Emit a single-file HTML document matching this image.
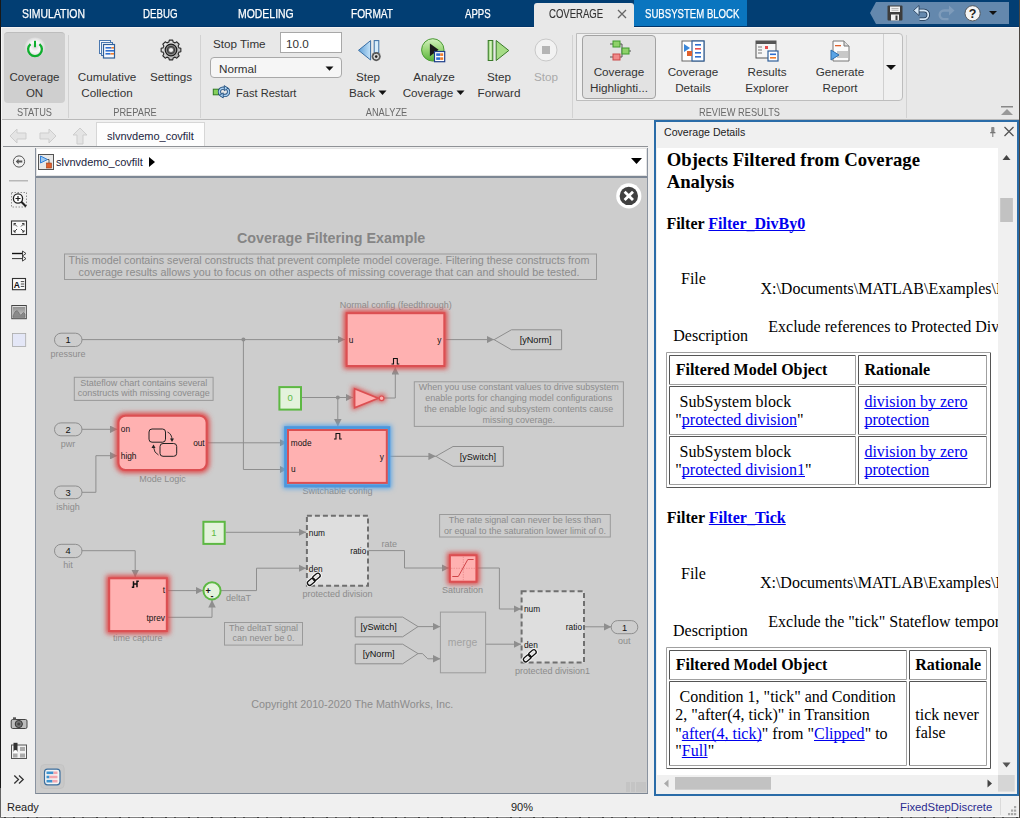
<!DOCTYPE html>
<html><head><meta charset="utf-8">
<style>
*{box-sizing:border-box}
html,body{margin:0;padding:0}
body{width:1020px;height:818px;position:relative;overflow:hidden;background:#f0f0f0;font-family:"Liberation Sans",sans-serif;color:#222}
.a{position:absolute}
.tab{position:absolute;top:7px;font-size:12px;color:#fff;white-space:nowrap;transform:scaleX(0.83);transform-origin:0 0;-webkit-text-stroke:0.25px #fff}
.rl{position:absolute;font-size:11.7px;color:#333;text-align:center;white-space:nowrap;line-height:16px;margin-top:1.5px}
.sec{position:absolute;top:106px;font-size:11px;color:#6a6a6a;white-space:nowrap;transform:scaleX(0.84);transform-origin:50% 0}
.vs{position:absolute;top:35px;width:1px;height:83px;background:#d2d2d2}
.serif{font-family:"Liberation Serif",serif;color:#000}
.lk{color:#0000ee;text-decoration:underline}
.tb{position:absolute;border-collapse:separate}
</style></head>
<body>
<!-- blue tab bar -->
<div class="a" style="left:0;top:0;width:1020px;height:27px;background:#023e73"></div>
<div class="a" style="left:0;top:0;width:1px;height:788px;background:#181818"></div><div class="a" style="left:0;top:788px;width:1px;height:30px;background:#646464"></div>
<div class="tab" style="left:22px;transform:scaleX(0.87)">SIMULATION</div>
<div class="tab" style="left:143px;transform:scaleX(0.81)">DEBUG</div>
<div class="tab" style="left:238px;transform:scaleX(0.87)">MODELING</div>
<div class="tab" style="left:351px;transform:scaleX(0.845)">FORMAT</div>
<div class="tab" style="left:465px;transform:scaleX(0.8)">APPS</div>
<div class="a" style="left:534px;top:3px;width:100px;height:24px;background:#e8e8e8;border-radius:3px 3px 0 0"></div>
<div class="tab" style="left:549px;color:#333;-webkit-text-stroke:0.15px #333;transform:scaleX(0.795)">COVERAGE</div>
<svg class="a" style="left:617px;top:9px" width="10" height="10"><path d="M1 1 L9 9 M9 1 L1 9" stroke="#666" stroke-width="1.3"/></svg>
<div class="a" style="left:634px;top:0;width:113px;height:27px;background:#0a75bf"></div>
<div class="tab" style="left:645px;transform:scaleX(0.8)">SUBSYSTEM BLOCK</div>

<!-- ribbon -->
<div class="a" style="left:1px;top:27px;width:1019px;height:92px;background:#e8e8e8"></div>
<div class="a" style="left:1px;top:119px;width:1019px;height:1px;background:#b9b9b9"></div>

<!-- STATUS -->
<div class="a" style="left:4px;top:32px;width:61px;height:71px;background:#cfcfcf;border-radius:4px;border-top:1px solid #bdbdbd"></div>
<svg class="a" style="left:23px;top:37px" width="24" height="24" viewBox="0 0 24 24">
 <defs><radialGradient id="pwg" cx="0.5" cy="0.42" r="0.5"><stop offset="0" stop-color="#ffffff" stop-opacity="0.15"/><stop offset="0.45" stop-color="#ffffff" stop-opacity="0.9"/><stop offset="1" stop-color="#ffffff" stop-opacity="0"/></radialGradient></defs>
 <circle cx="12" cy="11.5" r="11" fill="url(#pwg)"/>
 <path d="M7.56 7.01 A6.9 6.9 0 1 0 16.44 7.01" fill="none" stroke="#0fae2e" stroke-width="2.3"/>
 <rect x="11" y="3.8" width="2" height="6.4" fill="#0fae2e"/>
</svg>
<div class="rl" style="left:4px;top:67px;width:61px;font-size:11.5px">Coverage<br>ON</div>
<div class="sec" style="left:4px;width:61px;text-align:center">STATUS</div>
<div class="vs" style="left:68px"></div>
<!-- PREPARE -->
<svg class="a" style="left:98px;top:39px" width="20" height="20" viewBox="0 0 20 20">
 <rect x="1.5" y="1.5" width="11" height="13" fill="#f4f8fc" stroke="#4a78b0" stroke-width="1"/>
 <rect x="3.5" y="3.5" width="11" height="13" fill="#f4f8fc" stroke="#4a78b0" stroke-width="1"/>
 <rect x="5.5" y="5.5" width="11" height="13.5" fill="#f7f9fc" stroke="#2f5f9a" stroke-width="1.2"/>
 <rect x="7.5" y="8" width="6" height="1.6" fill="#2f6fcf"/><rect x="13.5" y="8" width="2.5" height="1.6" fill="#f07c2c"/>
 <rect x="7.5" y="11" width="8.5" height="1.6" fill="#2f6fcf"/>
 <rect x="7.5" y="14" width="5" height="1.6" fill="#2f6fcf"/><rect x="12.5" y="14" width="3.5" height="1.6" fill="#f07c2c"/>
</svg>
<div class="rl" style="left:72px;top:67px;width:70px">Cumulative<br>Collection</div>
<svg class="a" style="left:160px;top:39px" width="22" height="22" viewBox="0 0 22 22">
 <defs><linearGradient id="gg" x1="0" y1="0" x2="1" y2="1"><stop offset="0" stop-color="#f4f4f4"/><stop offset="1" stop-color="#a8a8a8"/></linearGradient></defs>
 <path d="M8.84 3.09 L9.28 1.15 L12.72 1.15 L13.16 3.09 L15.06 3.88 L16.75 2.82 L19.18 5.25 L18.12 6.94 L18.91 8.84 L20.85 9.28 L20.85 12.72 L18.91 13.16 L18.12 15.06 L19.18 16.75 L16.75 19.18 L15.06 18.12 L13.16 18.91 L12.72 20.85 L9.28 20.85 L8.84 18.91 L6.94 18.12 L5.25 19.18 L2.82 16.75 L3.88 15.06 L3.09 13.16 L1.15 12.72 L1.15 9.28 L3.09 8.84 L3.88 6.94 L2.82 5.25 L5.25 2.82 L6.94 3.88 Z" fill="url(#gg)" stroke="#2a2a2a" stroke-width="1.1" stroke-linejoin="round"/>
 <circle cx="11" cy="11" r="5.8" fill="#8a8a8a" stroke="#1a1a1a" stroke-width="1.2"/>
 <circle cx="11" cy="11" r="3.7" fill="#6a6a6a" stroke="#333" stroke-width="0.9"/>
 <circle cx="11" cy="11" r="2.1" fill="#eeeeee"/>
</svg>
<div class="rl" style="left:146px;top:67px;width:50px">Settings</div>
<div class="sec" style="left:69px;width:132px;text-align:center">PREPARE</div>
<div class="vs" style="left:200px"></div>
<!-- ANALYZE -->
<div class="a" style="left:213px;top:37px;font-size:11.7px;color:#333">Stop Time</div>
<div class="a" style="left:280px;top:32px;width:62px;height:21px;background:#fff;border:1px solid #a8a8a8"></div>
<div class="a" style="left:286px;top:37px;font-size:11.7px;color:#333">10.0</div>
<div class="a" style="left:210px;top:57px;width:132px;height:21px;background:#f6f6f6;border:1px solid #a9a9a9;border-radius:4px"></div>
<div class="a" style="left:219px;top:62px;font-size:11.7px;color:#333">Normal</div>
<svg class="a" style="left:325px;top:66px" width="9" height="6"><path d="M0.5 0.5 L8.5 0.5 L4.5 4.8 Z" fill="#111"/></svg>
<svg class="a" style="left:212px;top:85px" width="18" height="15" viewBox="0 0 18 15">
 <rect x="1.3" y="4.2" width="5.2" height="5.6" fill="#86d05a" stroke="#2f7a22" stroke-width="1"/>
 <path d="M13 3.2 H11 A3.6 3.6 0 0 0 11 10.4 M10.5 10.4 H13 A3.6 3.6 0 0 0 13 3.2" fill="none" stroke="#24507e" stroke-width="3.2"/>
 <path d="M13 3.2 H11 A3.6 3.6 0 0 0 11 10.4 M10.5 10.4 H13 A3.6 3.6 0 0 0 13 3.2" fill="none" stroke="#a9d0f2" stroke-width="1.5"/>
 <path d="M12.3 0.6 L16 3.2 L12.3 5.8 Z" fill="#a9d0f2" stroke="#24507e" stroke-width="0.9"/>
 <path d="M11.2 7.8 L7.5 10.4 L11.2 13 Z" fill="#a9d0f2" stroke="#24507e" stroke-width="0.9"/>
</svg>
<div class="a" style="left:236px;top:87px;font-size:11.1px;color:#333">Fast Restart</div>
<!-- step back -->
<svg class="a" style="left:357px;top:38px" width="26" height="24" viewBox="0 0 26 24">
 <defs><linearGradient id="sbg" x1="0" y1="0" x2="1" y2="0"><stop offset="0" stop-color="#5e9fd6"/><stop offset="1" stop-color="#c4e2f8"/></linearGradient></defs>
 <path d="M1.5 12.3 L13.6 2.6 L13.6 22 Z" fill="url(#sbg)" stroke="#3a6ea5" stroke-width="1"/>
 <rect x="17.2" y="2.6" width="4.6" height="12" fill="#d6ecfb" stroke="#3a6ea5" stroke-width="1"/>
 <circle cx="19.2" cy="18.6" r="4.6" fill="#6a6a6a"/>
 <circle cx="19.2" cy="18.6" r="3.4" fill="#d8d8d8" stroke="#333" stroke-width="0.8"/>
 <circle cx="19.2" cy="18.6" r="1.3" fill="#222"/>
</svg>
<div class="rl" style="left:343px;top:67px;width:50px">Step<br>Back<svg width="9" height="6" style="vertical-align:1px;margin-left:3px"><path d="M0.5 0.5 H8.5 L4.5 5 Z" fill="#111"/></svg></div>
<!-- analyze coverage -->
<svg class="a" style="left:419px;top:37px" width="28" height="26" viewBox="0 0 28 26">
 <defs><linearGradient id="acg" x1="0" y1="0" x2="0" y2="1"><stop offset="0" stop-color="#d4f0c0"/><stop offset="0.5" stop-color="#98d676"/><stop offset="1" stop-color="#58b23a"/></linearGradient></defs>
 <circle cx="13.8" cy="12.9" r="11.2" fill="url(#acg)" stroke="#4a9a34" stroke-width="1"/>
 <path d="M10.9 6.6 L19.6 12.8 L10.9 19.2 Z" fill="#1a1a1a"/>
 <rect x="15.5" y="14.5" width="10.2" height="10.2" fill="#fff" stroke="#1e3f8a" stroke-width="1.2"/>
 <rect x="17.2" y="16.3" width="4" height="2.6" fill="#2f6fcf"/><rect x="21.2" y="16.3" width="3" height="2.6" fill="#f07c2c"/>
 <rect x="17.2" y="20.3" width="4" height="2.6" fill="#2f6fcf"/><rect x="21.2" y="20.3" width="3" height="2.6" fill="#f07c2c"/>
</svg>
<div class="rl" style="left:398px;top:67px;width:72px">Analyze<br>Coverage<svg width="9" height="6" style="vertical-align:1px;margin-left:3px"><path d="M0.5 0.5 H8.5 L4.5 5 Z" fill="#111"/></svg></div>
<!-- step forward -->
<svg class="a" style="left:486px;top:38px" width="26" height="24" viewBox="0 0 26 24">
 <defs><linearGradient id="sfg" x1="0" y1="0" x2="1" y2="0"><stop offset="0" stop-color="#7cc85a"/><stop offset="0.5" stop-color="#d8f4c4"/><stop offset="1" stop-color="#8ed06a"/></linearGradient></defs>
 <rect x="2.2" y="2.5" width="4.6" height="20" fill="url(#sfg)" stroke="#3a7a2a" stroke-width="1"/>
 <path d="M10.2 2.5 L22.8 12.5 L10.2 22.5 Z" fill="#a6dc86" stroke="#3a7a2a" stroke-width="1"/>
</svg>
<div class="rl" style="left:474px;top:67px;width:50px">Step<br>Forward</div>
<!-- stop -->
<svg class="a" style="left:534px;top:38px" width="24" height="24" viewBox="0 0 24 24">
 <circle cx="12" cy="12" r="11" fill="#f2f2f2" stroke="#c8c8c8" stroke-width="1"/>
 <rect x="8" y="8" width="8" height="8" fill="#b4b4b4"/>
</svg>
<div class="rl" style="left:526px;top:67px;width:40px;color:#aaa">Stop</div>
<div class="sec" style="left:201px;width:371px;text-align:center">ANALYZE</div>
<div class="vs" style="left:572px"></div>
<!-- REVIEW RESULTS -->
<div class="a" style="left:576px;top:33px;width:327px;height:68px;background:#f0f0f0;border:1px solid #bdbdbd;border-radius:0 4px 4px 0"></div>
<div class="a" style="left:883px;top:34px;width:1px;height:66px;background:#d0d0d0"></div>
<svg class="a" style="left:886px;top:65px" width="11" height="6"><path d="M0 0 L10 0 L5 5 Z" fill="#111"/></svg>
<div class="a" style="left:582px;top:35px;width:74px;height:64px;background:#e2e2e2;border:1px solid #a3a3a3;border-radius:4px"></div>
<svg class="a" style="left:606px;top:40px" width="26" height="22" viewBox="0 0 26 22">
 <path d="M4 4 h3 M4 17 h3 M13 4 h3 v9 M13 17 h3 v-4 h2 M22 11 h3" stroke="#555" stroke-width="1" fill="none"/>
 <rect x="7" y="1" width="7" height="6" fill="#8fd16a" stroke="#3f9a2c" stroke-width="1"/>
 <rect x="16" y="8" width="7" height="6" fill="#8fd16a" stroke="#3f9a2c" stroke-width="1"/>
 <rect x="7" y="14" width="7" height="6" fill="#f08a8a" stroke="#c94a4a" stroke-width="1"/>
</svg>
<div class="rl" style="left:582px;top:62px;width:74px">Coverage<br>Highlighti...</div>
<svg class="a" style="left:681px;top:40px" width="24" height="22" viewBox="0 0 24 22">
 <rect x="1" y="1" width="22" height="20" fill="#fff" stroke="#666" stroke-width="1"/>
 <rect x="11" y="1" width="12" height="20" fill="#fff" stroke="#2f5f9a" stroke-width="1.2"/>
 <path d="M3 4 L9 8 L3 12 Z" fill="#3a86d8"/>
 <rect x="6" y="11" width="5" height="5" fill="#e0602c"/>
 <rect x="14" y="4" width="6" height="1.6" fill="#2f6fcf"/><rect x="14" y="8" width="6" height="1.6" fill="#e84c4c"/>
 <rect x="14" y="12" width="6" height="1.6" fill="#2f6fcf"/><rect x="14" y="16" width="6" height="1.6" fill="#2f6fcf"/>
</svg>
<div class="rl" style="left:660px;top:62px;width:66px">Coverage<br>Details</div>
<svg class="a" style="left:755px;top:40px" width="24" height="22" viewBox="0 0 24 22">
 <rect x="1" y="1" width="20" height="17" fill="#f6f6f6" stroke="#555" stroke-width="1"/>
 <rect x="1" y="1" width="20" height="3" fill="#555"/>
 <path d="M3 7 h4 M3 10 h4 M3 13 h4" stroke="#777" stroke-width="1"/>
 <rect x="10" y="6" width="3" height="3" fill="#e84c4c"/>
 <rect x="13" y="11" width="10" height="10" fill="#fff" stroke="#2f5f9a" stroke-width="1.2"/>
 <rect x="15" y="13.5" width="6" height="1.6" fill="#2f6fcf"/><rect x="15" y="17" width="6" height="1.6" fill="#f07c2c"/>
</svg>
<div class="rl" style="left:734px;top:62px;width:66px">Results<br>Explorer</div>
<svg class="a" style="left:829px;top:40px" width="22" height="22" viewBox="0 0 22 22">
 <path d="M4 1 h11 l5 5 v15 h-16 z" fill="#fbfbfb" stroke="#777" stroke-width="1"/>
 <path d="M15 1 v5 h5" fill="#ddd" stroke="#777" stroke-width="1"/>
 <rect x="6" y="5" width="6" height="1.3" fill="#e0602c"/>
 <rect x="8" y="11" width="11" height="7" fill="#c8c8c8"/>
 <path d="M2 10 L10 15 L2 20 Z" fill="#5aa4e6" stroke="#2f6fad" stroke-width="1"/>
</svg>
<div class="rl" style="left:806px;top:62px;width:68px">Generate<br>Report</div>
<div class="sec" style="left:576px;width:327px;text-align:center">REVIEW RESULTS</div>
<div class="vs" style="left:906px"></div>
<svg class="a" style="left:1000px;top:106px" width="14" height="10"><rect x="1" y="0" width="12" height="1.5" fill="#888"/><path d="M1 9 L7 3 L13 9 Z" fill="#999"/></svg>
<!-- quick access -->
<svg class="a" style="left:868px;top:2px" width="142" height="22" viewBox="0 0 142 22">
 <path d="M8 0 H141 V22 H8 L2 11 Z" fill="#6488ad"/>
 <rect x="19.5" y="3.5" width="15" height="15" fill="#3c3c3c" rx="1"/>
 <rect x="22" y="4.5" width="10" height="5.5" fill="#f0f0f0"/>
 <path d="M23.5 6.5 h7 M23.5 8.3 h7" stroke="#999" stroke-width="0.7"/>
 <rect x="23" y="12.5" width="8" height="6" fill="#f0f0f0"/><rect x="27.5" y="13.5" width="2" height="4.5" fill="#3c3c3c"/>
 <path d="M50 8.5 h6 a4.3 4.3 0 0 1 0 8.6 h-4.5" fill="none" stroke="#1f3650" stroke-width="3.4"/>
 <path d="M50 8.5 h6 a4.3 4.3 0 0 1 0 8.6 h-4.5" fill="none" stroke="#d4e6f6" stroke-width="1.8"/>
 <path d="M45.5 8.5 l5.5 -5 v10 z" fill="#d4e6f6" stroke="#1f3650" stroke-width="0.8"/>
 <path d="M82 8.5 h-6 a4.3 4.3 0 0 0 0 8.6 h4.5" fill="none" stroke="#7e9bba" stroke-width="2.4"/>
 <path d="M86.5 8.5 l-5.5 -5 v10 z" fill="#7e9bba"/>
 <circle cx="104.6" cy="11.3" r="7.6" fill="#f4f4f4" stroke="#444" stroke-width="0.8"/>
 <text x="104.6" y="16" font-size="12.5" font-weight="bold" text-anchor="middle" fill="#222" font-family="Liberation Sans">?</text>
 <path d="M121 9 h8 l-4 4 z" fill="#111"/>
</svg>


<div class="a" style="left:1px;top:27px;width:533px;height:1px;background:#f6f4f2"></div>
<div class="a" style="left:634px;top:27px;width:386px;height:1px;background:#f6f4f2"></div>
<div class="a" style="left:1px;top:27px;width:1px;height:789px;background:#f6f6f6"></div>
<div class="a" style="left:1px;top:26px;width:533px;height:1px;background:#01356a"></div>
<div class="a" style="left:634px;top:26px;width:386px;height:1px;background:#01356a"></div>
<!-- doc tab row -->
<div class="a" style="left:1px;top:120px;width:654px;height:27px;background:#f0f0f0"></div>
<svg class="a" style="left:8px;top:127px" width="90" height="18" viewBox="0 0 90 18">
 <path d="M2 9 L9 2 V6 H18 V12 H9 V16 Z" fill="#e4e4e4" stroke="#cdcdcd" stroke-width="1"/>
 <path d="M58 9 L51 2 V6 H42 V12 H51 V16 Z" transform="translate(-10 0)" fill="#e4e4e4" stroke="#cdcdcd" stroke-width="1"/>
 <path d="M72 1 L79 8 H75 V17 H69 V8 H65 Z" fill="#e4e4e4" stroke="#cdcdcd" stroke-width="1"/>
</svg>
<div class="a" style="left:96px;top:122px;width:109px;height:25px;background:#fdfdfd;border:1px solid #d6d6d6;border-bottom:none"></div>
<div class="a" style="left:107px;top:130px;font-size:11px;color:#1b2440">slvnvdemo_covfilt</div>
<div class="a" style="left:3px;top:146px;width:645px;height:1px;background:#8f9296"></div>
<!-- left toolbar -->
<div class="a" style="left:1px;top:148px;width:34px;height:647px;background:#f0f0f0"></div>
<div class="a" style="left:35px;top:148px;width:1px;height:646px;background:#8a93a0"></div>
<!-- address bar -->
<div class="a" style="left:36px;top:148px;width:611px;height:28px;background:#fff;border:1px solid #e4e4e4"></div>
<div class="a" style="left:36px;top:176px;width:612px;height:2px;background:#7d8794"></div>
<div class="a" style="left:38px;top:154px;width:16px;height:16px;background:#e8e8e8;border:1px solid #555"></div>
<svg class="a" style="left:39px;top:155px" width="14" height="14"><path d="M1.5 1 L8.5 4.5 L1.5 8 Z" fill="#9cc8f0" stroke="#2f7fd8" stroke-width="1"/><path d="M8.5 4.5 H10 V8" stroke="#333" fill="none" stroke-width="0.8"/><rect x="7.5" y="8" width="5" height="5" fill="#e0602c" stroke="#a03a10" stroke-width="0.6"/></svg>
<div class="a" style="left:56px;top:156px;font-size:11px;color:#1b2440">slvnvdemo_covfilt</div>
<svg class="a" style="left:148px;top:156px" width="8" height="12"><path d="M1 1 L7 6 L1 11 Z" fill="#000"/></svg>
<svg class="a" style="left:631px;top:157px" width="12" height="8"><path d="M0 1 H11 L5.5 7 Z" fill="#000"/></svg>
<!-- canvas -->
<div class="a" style="left:36px;top:178px;width:611px;height:615px;background:#cdcdcd"></div>
<div class="a" style="left:647px;top:148px;width:1px;height:646px;background:#8a93a0"></div>
<div class="a" style="left:36px;top:793px;width:612px;height:1px;background:#7d8794"></div>
<!-- status bar -->
<div class="a" style="left:1px;top:795px;width:1019px;height:22px;background:#f0f0f0"></div>
<div class="a" style="left:7px;top:801px;font-size:11px;color:#222">Ready</div>
<div class="a" style="left:511px;top:801px;font-size:11px;color:#222">90%</div>
<div class="a" style="left:900px;top:801px;font-size:11.3px;color:#2b2b8f">FixedStepDiscrete</div>
<div class="a" style="left:1000px;top:798px;width:1px;height:17px;background:#dadada"></div>
<div class="a" style="left:1px;top:816px;width:1019px;height:1px;background:#fafafa"></div><div class="a" style="left:0;top:817px;width:1020px;height:1px;background:repeating-linear-gradient(90deg,#7a7a7a 0 4px,#3a3a3a 4px 6px,#8a8a8a 6px 13px,#4a4a4a 13px 15px,#808080 15px 23px)"></div>
<!-- right panel -->
<div class="a" style="left:654px;top:120px;width:365px;height:676px;border:2px solid #2a6ca8;background:#f0f0f0"></div>
<div class="a" style="left:664px;top:126px;font-size:10.6px;color:#222">Coverage Details</div>
<div class="a" style="left:657px;top:148px;width:341px;height:627px;background:#fff"></div>

<!-- left toolbar icons -->
<svg class="a" style="left:1px;top:148px" width="34" height="646" viewBox="1 148 34 646">
 <circle cx="19" cy="161.5" r="5.6" fill="#f2f2f2" stroke="#555" stroke-width="1"/>
 <path d="M15.8 161.5 L18.6 158.8 V160.6 H22.3 V162.4 H18.6 V164.2 Z" fill="#555"/>
 <rect x="9" y="180" width="19" height="1.5" fill="#b8b8b8"/>
 <rect x="11.5" y="192.5" width="15" height="14.5" fill="none" stroke="#777" stroke-width="0.8" stroke-dasharray="1.5 1.5"/>
 <circle cx="18" cy="198.5" r="4.6" fill="#fff" stroke="#222" stroke-width="1.3"/>
 <path d="M15.5 198.5 H20.5 M18 196 V201" stroke="#222" stroke-width="1.2"/>
 <path d="M21.3 201.8 L26 206.5" stroke="#222" stroke-width="2"/>
 <rect x="11.5" y="221" width="15" height="13.5" fill="#fafafa" stroke="#333" stroke-width="1.1"/>
 <path d="M14 223.5 L17 226.5 M14 223.5 H16 M14 223.5 V225.5 M24 223.5 L21 226.5 M24 223.5 H22 M24 223.5 V225.5 M14 232 L17 229 M14 232 H16 M14 232 V230 M24 232 L21 229 M24 232 H22 M24 232 V230" stroke="#333" stroke-width="0.9" fill="none"/>
 <path d="M12 253.5 H23" stroke="#111" stroke-width="1.4"/>
 <path d="M12 258.6 H23" stroke="#333" stroke-width="1"/>
 <path d="M22.5 251 L26 253.5 L22.5 256 Z M22.5 256.1 L26 258.6 L22.5 261.1 Z" stroke="#333" stroke-width="0.9" fill="#f0f0f0"/>
 <rect x="12.5" y="278.5" width="13" height="11.2" fill="#fafafa" stroke="#333" stroke-width="1.1"/>
 <text x="13.8" y="287.6" font-size="8.5" font-weight="bold" fill="#111" font-family="Liberation Sans">A</text>
 <path d="M20.8 281.6 H24.2 M20.8 284 H24.2 M20.8 286.4 H24.2" stroke="#333" stroke-width="0.9"/>
 <defs><linearGradient id="imgg" x1="0" y1="0" x2="0" y2="1"><stop offset="0" stop-color="#909090"/><stop offset="1" stop-color="#d0d0d0"/></linearGradient></defs>
 <rect x="11.8" y="305.5" width="14.5" height="13.2" fill="#f4f4f4" stroke="#444" stroke-width="1"/>
 <rect x="13" y="306.8" width="12.1" height="10.6" fill="url(#imgg)"/>
 <path d="M13 316 Q16 308 18.5 312 Q20.5 317 22 314 Q23.5 311 25 314 V317.4 H13 Z" fill="#8a8a8a" stroke="#666" stroke-width="0.6"/>
 <rect x="12.5" y="333.5" width="13.2" height="13" fill="#e4e7f7" stroke="#aaa" stroke-width="0.8"/>
 <!-- camera -->
 <rect x="11.2" y="719.5" width="15.8" height="9" rx="1.5" fill="#bdbdbd" stroke="#444" stroke-width="1"/>
 <rect x="13" y="717.3" width="3" height="2.5" fill="#555"/>
 <circle cx="18.8" cy="724" r="3.6" fill="#777" stroke="#333" stroke-width="1"/>
 <circle cx="18.8" cy="724" r="1.6" fill="#444"/>
 <!-- layout icon -->
 <rect x="11.5" y="745" width="15" height="13.5" fill="#f2f2f2" stroke="#555" stroke-width="1"/>
 <rect x="13.5" y="742.8" width="4" height="9" fill="#333"/>
 <circle cx="15.5" cy="752" r="2" fill="#fff"/>
 <rect x="20" y="747" width="5" height="4" fill="#aaa"/><rect x="13" y="753.5" width="4.5" height="4" fill="#aaa"/><rect x="20" y="753.5" width="5" height="4" fill="#aaa"/>
 <path d="M14.3 775.5 L18.5 779.5 L14.3 783.5 M19 775.5 L23.2 779.5 L19 783.5" stroke="#333" stroke-width="1.3" fill="none"/>
</svg>
<!-- right panel content -->
<svg class="a" style="left:985px;top:124px" width="32" height="16" viewBox="0 0 32 16">
 <rect x="6.2" y="3" width="3.2" height="5.5" rx="0.8" fill="#8a8a8a"/><rect x="5.2" y="8" width="5.2" height="1.3" fill="#777"/><rect x="7.3" y="9" width="1" height="4" fill="#777"/>
 <path d="M19.5 3 L28.5 12 M28.5 3 L19.5 12" stroke="#555" stroke-width="1.3"/>
</svg>
<svg class="a" style="left:657px;top:148px" width="341" height="627" viewBox="657 148 341 627" font-family="Liberation Serif">
 <g fill="#000">
  <text x="666.7" y="165.6" font-size="18.72" font-weight="bold">Objects Filtered from Coverage</text>
  <text x="666.7" y="187.6" font-size="18.72" font-weight="bold">Analysis</text>
  <text x="666.4" y="229" font-size="16" font-weight="bold">Filter <tspan fill="#0000ee">Filter_DivBy0</tspan></text>
  <text x="681" y="284.4" font-size="16">File</text>
  <text x="760.4" y="293.6" font-size="16">X:\Documents\MATLAB\Examples\R2020b\slcoverage</text>
  <text x="673.3" y="341.2" font-size="16">Description</text>
  <text x="768.3" y="332.0" font-size="16">Exclude references to Protected Division blocks</text>
  <text x="666.8" y="522.5" font-size="16" font-weight="bold">Filter <tspan fill="#0000ee">Filter_Tick</tspan></text>
  <text x="681" y="579.3" font-size="16">File</text>
  <text x="759.9" y="588.2" font-size="16">X:\Documents\MATLAB\Examples\R2020b\slcoverage</text>
  <text x="673" y="636.2" font-size="16">Description</text>
  <text x="768.3" y="627.0" font-size="16">Exclude the "tick" Stateflow temporal event</text>
 </g>
 <!-- table 1 -->
 <g fill="none" stroke-width="1">
  <path d="M666.5 487.5 V352.5 H990" stroke="#a0a0a0"/>
  <path d="M990.5 352.5 V487.5 H666.5" stroke="#555"/>
 </g>
 <g id="cells1" fill="none" stroke-width="1">
  <path d="M669.5 384.5 V355.5 H855.5" stroke="#555"/><path d="M855.5 355.5 V384.5 H669.5" stroke="#a0a0a0"/>
  <path d="M858.5 384.5 V355.5 H986.5" stroke="#555"/><path d="M986.5 355.5 V384.5 H858.5" stroke="#a0a0a0"/>
  <path d="M669.5 434.5 V386.5 H855.5" stroke="#555"/><path d="M855.5 386.5 V434.5 H669.5" stroke="#a0a0a0"/>
  <path d="M858.5 434.5 V386.5 H986.5" stroke="#555"/><path d="M986.5 386.5 V434.5 H858.5" stroke="#a0a0a0"/>
  <path d="M669.5 484.5 V436.5 H855.5" stroke="#555"/><path d="M855.5 436.5 V484.5 H669.5" stroke="#a0a0a0"/>
  <path d="M858.5 484.5 V436.5 H986.5" stroke="#555"/><path d="M986.5 436.5 V484.5 H858.5" stroke="#a0a0a0"/>
 </g>
 <g font-size="16" fill="#000">
  <text x="675.7" y="374.8" font-weight="bold">Filtered Model Object</text>
  <text x="864.4" y="374.8" font-weight="bold">Rationale</text>
  <text x="679.6" y="407.2">SubSystem block</text>
  <text x="675.3" y="425.4">"<tspan fill="#0000ee">protected division</tspan>"</text>
  <text x="864.4" y="407.4" fill="#0000ee">division by zero</text>
  <text x="864.4" y="425.4" fill="#0000ee">protection</text>
  <text x="679.6" y="457.2">SubSystem block</text>
  <text x="675.3" y="475.4">"<tspan fill="#0000ee">protected division1</tspan>"</text>
  <text x="864.4" y="457.4" fill="#0000ee">division by zero</text>
  <text x="864.4" y="475.4" fill="#0000ee">protection</text>
 </g>
 <!-- table 2 -->
 <g fill="none" stroke-width="1">
  <path d="M666.5 768.5 V647.5 H990" stroke="#a0a0a0"/>
  <path d="M990.5 647.5 V768.5 H666.5" stroke="#555"/>
  <path d="M669.5 679.5 V650.5 H906.5" stroke="#555"/><path d="M906.5 650.5 V679.5 H669.5" stroke="#a0a0a0"/>
  <path d="M909.5 679.5 V650.5 H986.5" stroke="#555"/><path d="M986.5 650.5 V679.5 H909.5" stroke="#a0a0a0"/>
  <path d="M669.5 765.5 V681.5 H906.5" stroke="#555"/><path d="M906.5 681.5 V765.5 H669.5" stroke="#a0a0a0"/>
  <path d="M909.5 765.5 V681.5 H986.5" stroke="#555"/><path d="M986.5 681.5 V765.5 H909.5" stroke="#a0a0a0"/>
 </g>
 <g font-size="16" fill="#000">
  <text x="675.7" y="669.8" font-weight="bold">Filtered Model Object</text>
  <text x="915.3" y="669.8" font-weight="bold">Rationale</text>
  <text x="679.6" y="702.2">Condition 1, "tick" and Condition</text>
  <text x="675.3" y="720.4">2, "after(4, tick)" in Transition</text>
  <text x="675.3" y="738.5">"<tspan fill="#0000ee">after(4, tick)</tspan>" from "<tspan fill="#0000ee">Clipped</tspan>" to</text>
  <text x="675.3" y="756.3">"<tspan fill="#0000ee">Full</tspan>"</text>
  <text x="915.3" y="720.2">tick never</text>
  <text x="915.3" y="738.2">false</text>
 </g>
 <g stroke="#0000ee" stroke-width="1" fill="none">
  <path d="M708.4 230.5 H805.3"/>
  <path d="M708.8 524.5 H785.8"/>
  <path d="M681.8 426.5 H797.0"/>
  <path d="M864.4 408.5 H967.5"/>
  <path d="M864.4 426.5 H929.3"/>
  <path d="M681.8 476.5 H805.0"/>
  <path d="M864.4 458.5 H967.5"/>
  <path d="M864.4 476.5 H929.3"/>
  <path d="M681.8 740.5 H761.8"/>
  <path d="M814.0 740.5 H864.7"/>
  <path d="M681.8 757.5 H707.6"/>
 </g>
</svg>
<!-- scrollbars -->
<div class="a" style="left:998px;top:148px;width:19px;height:627px;background:#f0f0f0"></div>
<svg class="a" style="left:998px;top:148px" width="19" height="627">
 <path d="M4.5 12 L8.5 7 L12.5 12 Z" fill="#444"/>
 <rect x="2.2" y="50" width="12.7" height="24" fill="#c2c2c2"/>
 <path d="M4.5 614.5 L8.5 619.5 L12.5 614.5 Z" fill="#555"/>
</svg>
<div class="a" style="left:657px;top:775px;width:360px;height:19px;background:#f0f0f0"></div>
<svg class="a" style="left:657px;top:775px" width="360" height="19">
 <path d="M11.5 4.5 L7 8.5 L11.5 12.5 Z" fill="#aaa"/>
 <rect x="18" y="2" width="96" height="12.7" fill="#c2c2c2"/>
 <path d="M330.5 4.5 L335 8.5 L330.5 12.5 Z" fill="#444"/>
 <rect x="341" y="0" width="16.7" height="16.6" fill="#d6d6d6"/>
</svg>

<!-- DIAGRAM -->
<svg class="a" style="left:0;top:0" width="1020" height="818" viewBox="0 0 1020 818" font-family="Liberation Sans">
<defs>
 <filter id="glow" x="-40%" y="-40%" width="180%" height="180%"><feGaussianBlur stdDeviation="2.7"/></filter>
 <marker id="ar" viewBox="0 0 10 10" refX="10" refY="5" markerWidth="7.5" markerHeight="7.5" markerUnits="userSpaceOnUse" orient="auto"><path d="M0 0 L10 5 L0 10 Z" fill="#8e8e8e"/></marker>
</defs>
<!-- close button -->
<circle cx="628.8" cy="195.9" r="12.6" fill="#fff"/>
<circle cx="628.8" cy="195.9" r="9.2" fill="#404040"/>
<path d="M624.6 191.7 L633 200.1 M633 191.7 L624.6 200.1" stroke="#fff" stroke-width="2.8"/>
<!-- title & annotations -->
<text x="237" y="243" font-size="14.3" font-weight="bold" fill="#858585">Coverage Filtering Example</text>
<rect x="64.5" y="254" width="532" height="25.5" fill="none" stroke="#9a9a9a" stroke-width="1"/>
<g font-size="10.75" fill="#8c8c8c" text-anchor="middle">
 <text x="329" y="263.5">This model contains several constructs that prevent complete model coverage. Filtering these constructs from</text>
 <text x="329" y="276">coverage results allows you to focus on other aspects of missing coverage that can and should be tested.</text>
</g>
<rect x="74.3" y="377.3" width="138.8" height="23.1" fill="none" stroke="#9a9a9a" stroke-width="1"/>
<g font-size="9" fill="#8c8c8c" text-anchor="middle">
 <text x="143.7" y="386">Stateflow chart contains several</text>
 <text x="143.7" y="396">constructs with missing coverage</text>
</g>
<rect x="414.3" y="381.8" width="209.1" height="44.6" fill="none" stroke="#9a9a9a" stroke-width="1"/>
<g font-size="9" fill="#8c8c8c" text-anchor="middle">
 <text x="518.8" y="389.6">When you use constant values to drive subsystem</text>
 <text x="518.8" y="400.6">enable ports for changing model configurations</text>
 <text x="518.8" y="411.6">the enable logic and subsystem contents cause</text>
 <text x="518.8" y="422.6">missing coverage.</text>
</g>
<rect x="439.6" y="514.5" width="170.7" height="22.5" fill="none" stroke="#9a9a9a" stroke-width="1"/>
<g font-size="9" fill="#8c8c8c" text-anchor="middle">
 <text x="525" y="522.5">The rate signal can never be less than</text>
 <text x="525" y="533.5">or equal to the saturation lower limit of 0.</text>
</g>
<rect x="224.5" y="622.5" width="78" height="22.6" fill="none" stroke="#9a9a9a" stroke-width="1"/>
<g font-size="9" fill="#8c8c8c" text-anchor="middle">
 <text x="263.5" y="631">The deltaT signal</text>
 <text x="263.5" y="640.6">can never be 0.</text>
</g>
<text x="251.2" y="707.7" font-size="10.75" fill="#8c8c8c">Copyright 2010-2020 The MathWorks, Inc.</text>

<!-- signal lines -->
<g stroke="#8e8e8e" stroke-width="1" fill="none">
 <path d="M82 339.6 H345" marker-end="url(#ar)"/>
 <path d="M243.4 339.6 V469.5 H287" marker-end="url(#ar)"/>
 <path d="M445.3 339.6 H494" marker-end="url(#ar)"/>
 <path d="M81.8 429.3 H117.5" marker-end="url(#ar)"/>
 <path d="M81.8 492.3 H95.9 V455.7 H117.5" marker-end="url(#ar)"/>
 <path d="M207.6 442.8 H287" marker-end="url(#ar)"/>
 <path d="M302 397.5 H353" marker-end="url(#ar)"/>
 <path d="M337.8 397.5 V426.5" marker-end="url(#ar)"/>
 <path d="M384.2 398 H395.3 V367" marker-end="url(#ar)"/>
 <path d="M390.2 456.3 H435.9" marker-end="url(#ar)"/>
 <path d="M225.7 532.3 H306" marker-end="url(#ar)"/>
 <path d="M81.8 550.7 H135.2 V577.3" marker-end="url(#ar)"/>
 <path d="M167.8 590.6 H203" marker-end="url(#ar)"/>
 <path d="M167.8 617.3 H212 V600" marker-end="url(#ar)"/>
 <path d="M221 590.6 H256.5 V568.2 H306" marker-end="url(#ar)"/>
 <path d="M369 550.6 H404.5 V568 H449.2" marker-end="url(#ar)"/>
 <path d="M477.5 568 H499.4 V609 H521.1" marker-end="url(#ar)"/>
 <path d="M584.5 626.8 H611.2" marker-end="url(#ar)"/>
 <path d="M418 626.6 H440.4" marker-end="url(#ar)"/>
 <path d="M418 653.6 H422.4 L427.8 658.8 H440.4" marker-end="url(#ar)"/>
 <path d="M485.6 644.2 H521.1" marker-end="url(#ar)"/>
</g>
<circle cx="243.4" cy="339.6" r="2" fill="#8e8e8e"/>
<circle cx="337.8" cy="397.5" r="2" fill="#8e8e8e"/>
<g font-size="9" fill="#8c8c8c">
 <text x="226" y="601.3">deltaT</text>
 <text x="381.4" y="546.7">rate</text>
</g>

<!-- ports -->
<g fill="none" stroke="#8e8e8e" stroke-width="1">
 <rect x="54.5" y="333.2" width="27.5" height="13.3" rx="6.6"/>
 <rect x="54.5" y="422.9" width="27.5" height="12.9" rx="6.4"/>
 <rect x="54.5" y="486" width="27.5" height="12.7" rx="6.3"/>
 <rect x="54.5" y="544.3" width="27.5" height="13.3" rx="6.6"/>
 <rect x="611.2" y="620.6" width="26.6" height="13.1" rx="6.5"/>
</g>
<g font-size="9.3" fill="#111" text-anchor="middle">
 <text x="68.2" y="343.1">1</text>
 <text x="68.2" y="433">2</text>
 <text x="68.2" y="495.9">3</text>
 <text x="68.2" y="554.4">4</text>
 <text x="624.5" y="630.9">1</text>
</g>
<g font-size="9" fill="#8c8c8c" text-anchor="middle">
 <text x="68" y="357">pressure</text>
 <text x="68" y="447">pwr</text>
 <text x="68" y="509.6">ishigh</text>
 <text x="68" y="567.8">hit</text>
 <text x="624.3" y="644">out</text>
 <text x="395.8" y="307.7">Normal config (feedthrough)</text>
 <text x="162.5" y="481.8">Mode Logic</text>
 <text x="337.6" y="493.9">Switchable config</text>
 <text x="137.8" y="641.4">time capture</text>
 <text x="337.6" y="597">protected division</text>
 <text x="462.6" y="592.5">Saturation</text>
 <text x="552.4" y="673.5">protected division1</text>
</g>

<!-- red glows -->
<g fill="#de4a4a" filter="url(#glow)">
 <rect x="343.7" y="310.2" width="103.6" height="58.8"/>
 <rect x="115.5" y="412.7" width="94.1" height="60.3" rx="9"/>
 <path d="M352 386 L381 398 L352 410.2 Z"/>
 <circle cx="381.8" cy="398" r="4"/>
 <rect x="106.2" y="575.3" width="63.6" height="58.7"/>
 <rect x="447.2" y="552.6" width="32.3" height="31.8"/>
 <rect x="283" y="425" width="108.5" height="63.5" fill="#5aa6e8"/>
</g>
<!-- Normal config -->
<rect x="346.7" y="313.2" width="97.6" height="52.8" fill="#ffb1b1" stroke="#dc4f52" stroke-width="2"/>
<!-- Mode logic -->
<rect x="118.5" y="415.7" width="88.1" height="54.3" rx="7" fill="#ffb1b1" stroke="#dc4f52" stroke-width="2"/>
<!-- NOT -->
<path d="M354.6 388.8 L378.2 398.2 L354.6 407.8 Z" fill="#ffb1b1" stroke="#dc4f52" stroke-width="1.7"/>
<circle cx="381.6" cy="398.3" r="2.3" fill="#ffb1b1" stroke="#dc4f52" stroke-width="1.2"/>
<!-- time capture -->
<rect x="109.2" y="578.3" width="57.6" height="52.7" fill="#ffb1b1" stroke="#dc4f52" stroke-width="2"/>
<!-- saturation -->
<rect x="449.9" y="555.3" width="26.5" height="26.4" fill="#ffb1b1" stroke="#dc4f52" stroke-width="2"/>
<path d="M451 568.3 H476 M463.3 556.5 V581" stroke="#e88a8a" stroke-width="0.8" stroke-dasharray="1.5 1"/>
<path d="M452.3 576.5 H458.3 L467.8 559.5 H473.6" stroke="#d04448" stroke-width="1" fill="none"/>
<!-- Switchable config -->
<rect x="285.5" y="427.5" width="103.5" height="58.6" fill="none" stroke="#4d97dd" stroke-width="2.6"/>
<rect x="288" y="430" width="98.8" height="52.9" fill="#ffb1b1" stroke="#dc4f52" stroke-width="2"/>
<!-- constants -->
<rect x="279.4" y="387.1" width="21.6" height="22.5" fill="#e4f2dc" stroke="#5db843" stroke-width="2"/>
<rect x="203.4" y="521.8" width="21.3" height="22.1" fill="#e4f2dc" stroke="#5db843" stroke-width="2"/>
<g font-size="9.5" fill="#5db843" text-anchor="middle">
 <text x="290.2" y="401.3">0</text>
 <text x="214" y="535.8">1</text>
</g>
<!-- sum -->
<circle cx="212" cy="590.8" r="8.6" fill="#e4f2dc" stroke="#5db843" stroke-width="2"/>
<text x="205.5" y="593.5" font-size="9" font-weight="bold" fill="#111">+</text>
<text x="210.5" y="598.5" font-size="9" font-weight="bold" fill="#111">-</text>
<!-- protected divisions -->
<rect x="306.9" y="515.7" width="61.1" height="70" fill="#dedede" stroke="#6f6f6f" stroke-width="2" stroke-dasharray="5 3"/>
<rect x="521.6" y="591.3" width="62.4" height="71.2" fill="#dedede" stroke="#6f6f6f" stroke-width="2" stroke-dasharray="5 3"/>
<!-- merge -->
<rect x="440.4" y="612.1" width="45.2" height="60.7" fill="none" stroke="#9c9c9c" stroke-width="1"/>
<text x="462.6" y="645.5" font-size="10.4" fill="#a2a2a2" text-anchor="middle">merge</text>
<!-- gotos / froms -->
<g fill="none" stroke="#8e8e8e" stroke-width="1">
 <path d="M494.1 339.7 L511.4 329.8 H561.6 V349.7 H511.4 Z"/>
 <path d="M435.9 456.3 L453 446.5 H503.3 V466.3 H453 Z"/>
 <path d="M355.2 617.1 H402.7 L418 626.6 L402.7 636.8 H355.2 Z"/>
 <path d="M355.2 644.2 H402.7 L418 653.6 L402.7 663.8 H355.2 Z"/>
</g>
<g font-size="9.1" fill="#111">
 <text x="519.7" y="342.9">[yNorm]</text>
 <text x="459.7" y="459.6">[ySwitch]</text>
 <text x="360.4" y="629.6">[ySwitch]</text>
 <text x="362.7" y="656.7">[yNorm]</text>
</g>
<!-- port labels -->
<g font-size="8.3" fill="#111">
 <text x="348.8" y="342.6">u</text>
 <text x="120.8" y="431.8">on</text>
 <text x="120.8" y="458.6">high</text>
 <text x="290.8" y="445.5">mode</text>
 <text x="291" y="472.4">u</text>
 <text x="308.8" y="535.7">num</text>
 <text x="308.8" y="571.6">den</text>
 <text x="524" y="612">num</text>
 <text x="524" y="648">den</text>
</g>
<g font-size="8.3" fill="#111" text-anchor="end">
 <text x="441.5" y="342.6">y</text>
 <text x="204.7" y="445.5">out</text>
 <text x="383.8" y="460">y</text>
 <text x="165" y="593.3">t</text>
 <text x="165" y="620.8">tprev</text>
 <text x="366.3" y="553.9">ratio</text>
 <text x="582" y="630">ratio</text>
</g>
<!-- enable symbols -->
<path d="M391.5 364 H393.5 V358.5 H397.3 V364 H399.3" stroke="#111" stroke-width="1.1" fill="none"/>
<path d="M334 439 H336 V433.5 H339.8 V439 H341.8" stroke="#111" stroke-width="1.1" fill="none"/>
<!-- trigger symbol -->
<path d="M131.8 587.2 H133.5 V581.2 M133.5 584 H137 M137 587.2 V581.2 H138.8" stroke="#111" stroke-width="1.5" fill="none"/>
<!-- state icon -->
<rect x="149" y="429" width="16.5" height="13.2" rx="3" fill="none" stroke="#222" stroke-width="1"/>
<rect x="160" y="443.5" width="16.7" height="12.8" rx="3" fill="none" stroke="#222" stroke-width="1"/>
<path d="M167.5 432 Q172 434 172 440" stroke="#222" stroke-width="0.9" fill="none"/>
<path d="M170 438.5 L172 442 L174 438.5 Z" fill="#222"/>
<path d="M158.5 455 Q154 453 153.5 447" stroke="#222" stroke-width="0.9" fill="none"/>
<path d="M151.5 448 L153.5 444.5 L155.5 448 Z" fill="#222"/>
<!-- link icons -->
<g id="lnk1">
 <g fill="none" stroke="#fff" stroke-width="3" opacity="0.9">
  <rect x="307" y="579.5" width="8.4" height="4.6" rx="2.3" transform="rotate(-40 311.2 581.8)"/>
  <rect x="312.2" y="574.5" width="8.4" height="4.6" rx="2.3" transform="rotate(-40 316.4 576.8)"/>
 </g>
 <g fill="none" stroke="#111" stroke-width="1.3">
  <rect x="307" y="579.5" width="8.4" height="4.6" rx="2.3" transform="rotate(-40 311.2 581.8)"/>
  <rect x="312.2" y="574.5" width="8.4" height="4.6" rx="2.3" transform="rotate(-40 316.4 576.8)"/>
 </g>
</g>
<use href="#lnk1" transform="translate(216 76.5)"/>
<!-- bottom widgets -->
<rect x="40.7" y="764.5" width="23.5" height="24" rx="4" fill="#c8c8c8" stroke="#c0c0c0" stroke-width="0.8"/>
<rect x="44.5" y="769.2" width="15.5" height="15.6" rx="3" fill="#f5f5f5" stroke="#3d6f9e" stroke-width="1.2"/>
<rect x="46.5" y="771.5" width="7" height="2.6" fill="#3c93cf"/><rect x="53.5" y="771.5" width="4" height="2.6" fill="#f3a6ae"/>
<rect x="46.5" y="775.7" width="3" height="2.6" fill="#3c93cf"/><rect x="49.5" y="775.7" width="8" height="2.6" fill="#f3a6ae"/>
<rect x="46.5" y="779.9" width="6" height="2.6" fill="#3c93cf"/><rect x="52.5" y="779.9" width="5" height="2.6" fill="#f3a6ae"/>
<g fill="#c4c4c4"><rect x="626" y="782" width="4" height="10"/><rect x="631" y="782" width="4" height="10"/><rect x="636" y="782" width="10" height="10"/></g>
</svg>

<svg class="a" style="left:1006px;top:805px" width="12" height="11"><g fill="#a8a8a8"><rect x="8" y="1" width="2.2" height="2.2"/><rect x="5" y="4.5" width="2.2" height="2.2"/><rect x="8" y="4.5" width="2.2" height="2.2"/><rect x="2" y="8" width="2.2" height="2.2"/><rect x="5" y="8" width="2.2" height="2.2"/><rect x="8" y="8" width="2.2" height="2.2"/></g></svg>
<div class="a" style="left:1019px;top:0;width:1px;height:818px;background:#4a4540"></div>
</body></html>
